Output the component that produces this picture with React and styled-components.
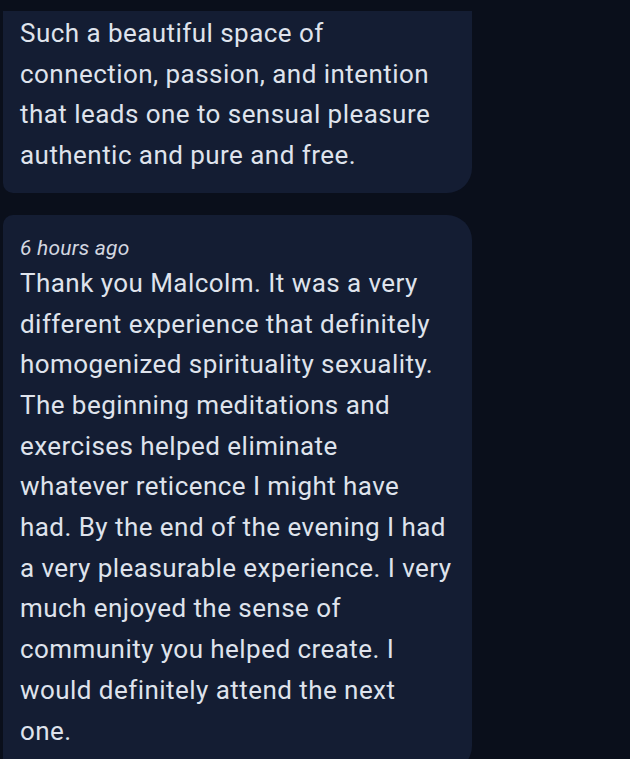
import React from "react";
import styled, { createGlobalStyle } from "styled-components";

const Global = createGlobalStyle`
  html, body { margin: 0; padding: 0; background: #0a0f1b; }
  body { font-family: Roboto, "Noto Sans", sans-serif; }
`;

const Page = styled.div`
  width: 630px;
  height: 759px;
  overflow: hidden;
  background: #0a0f1b;
  display: flex;
  flex-direction: column;
  gap: 22px;
  padding: 11px 0 0 3px;
  box-sizing: border-box;
`;

const Bubble = styled.div`
  width: 469px;
  box-sizing: border-box;
  background: #141d33;
  padding: ${(p) => (p.$cut ? "2px 17px 17px 17px" : "20px 17px 20px 17px")};
  border-radius: ${(p) => (p.$cut ? "0 0 25px 10px" : "10px 25px 25px 10px")};
  flex-shrink: 0;
`;

const Time = styled.div`
  font-style: italic;
  font-size: 21px;
  line-height: 26px;
  letter-spacing: 0.2px;
  color: #d3d7e0;
  margin-bottom: 2px;
`;

const Text = styled.p`
  margin: 0;
  font-size: 26px;
  line-height: 40.7px;
  letter-spacing: 0.45px;
  color: #dfe3ec;
`;

export default function App() {
  return (
    <>
      <Global />
      <Page>
        <Bubble $cut>
          <Text>
            Such a beautiful space of<br />
            connection, passion, and intention<br />
            that leads one to sensual pleasure<br />
            authentic and pure and free.
          </Text>
        </Bubble>
        <Bubble>
          <Time>6 hours ago</Time>
          <Text>
            Thank you Malcolm. It was a very<br />
            different experience that definitely<br />
            homogenized spirituality sexuality.<br />
            The beginning meditations and<br />
            exercises helped eliminate<br />
            whatever reticence I might have<br />
            had. By the end of the evening I had<br />
            a very pleasurable experience. I very<br />
            much enjoyed the sense of<br />
            community you helped create. I<br />
            would definitely attend the next<br />
            one.
          </Text>
        </Bubble>
      </Page>
    </>
  );
}
